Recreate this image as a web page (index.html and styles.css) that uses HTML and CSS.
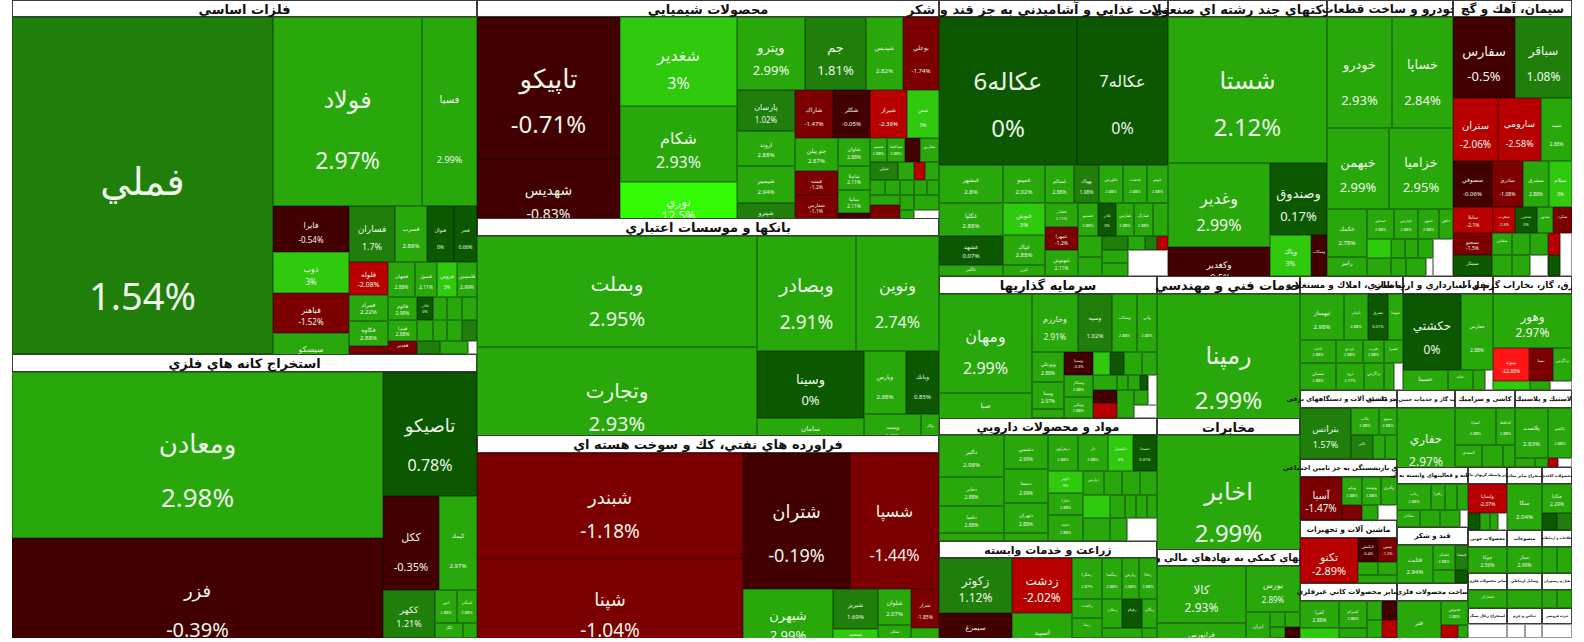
FILE: index.html
```html
<!DOCTYPE html>
<html lang="fa">
<head>
<meta charset="utf-8">
<title>نقشه بازار</title>
<link rel="stylesheet" href="styles.css">
</head>
<body>
<div class="map" id="map"></div>
<script src="script.js"></script>
</body>
</html>
```

FILE: styles.css
```css
html, body { margin: 0; padding: 0; background: #ffffff; }
body { font-family: "Noto Sans", "DejaVu Sans", sans-serif; }
.map { position: relative; margin-left: 12px; width: 1560px; height: 638px; overflow: hidden; }
.hd {
  position: absolute; box-sizing: border-box; background: #ffffff;
  border: 1px solid #3c3c3c; display: flex; align-items: center; justify-content: center;
  white-space: nowrap; color: #111111; font-family: "DejaVu Sans", sans-serif;
  font-weight: bold; direction: rtl; line-height: 1; padding-top: 1px;
}
.tl {
  position: absolute; box-sizing: border-box; border: 1px solid rgba(0,0,0,0.28);
  overflow: hidden; color: #eef6ea; text-align: center;
}
.nm, .pc { display: block; line-height: 1.2; white-space: nowrap; }
.g  { background: #28a80b; }
.g2 { background: #1f7f0a; }
.g3 { background: #0b5800; }
.gb { background: #2fc90e; }
.gl { background: #33fb05; }
.r1 { background: #420000; }
.r2 { background: #7c0000; }
.r3 { background: #b90000; }
.rb { background: #ff1414; }
.w  { background: #ffffff; border-color: #9a9a9a; }
```

FILE: script.js
```js
(function () {
  var OX = 12;
  var DATA = [
    { h: [12,0,477,17,'فلزات اساسي',13], t: [
      [12,17,273,354,'g2','فملي','1.54%',38,38,[163,278]],
      [273,17,422,206,'g','فولاد','2.97%',24,23],
      [422,17,477,206,'g','فسپا','2.99%',10,9],
      [273,206,349,252,'r1','فايرا','-0.54%',8],
      [349,206,395,262,'g2','فساران','1.7%',9],
      [395,206,427,262,'g','فسرب','2.88%',6],
      [427,206,454,262,'g3','فنوال','0%',5],
      [454,206,477,262,'g3','فجر','0.66%',5],
      [273,252,349,293,'gb','ذوب','3%',8],
      [349,262,388,295,'r3','فلوله','-2.08%',7],
      [388,262,415,297,'g','فجهان','2.88%',5],
      [415,262,437,297,'g','فسوژ','2.11%',5],
      [437,262,457,297,'gb','فروس','3%',5],
      [457,262,477,297,'g','فاسمين','2.99%',5],
      [273,293,349,333,'r2','فباهنر','-1.52%',8],
      [273,333,349,372,'g','سيسكو','',8],
      [349,295,388,321,'g','فمراد','2.22%',6],
      [349,321,388,346,'g','فكاوه','2.88%',6],
      [349,346,388,354,'r2','','',0],
      [388,297,417,320,'g','فالوم','2.99%',5],
      [417,297,433,320,'g3','فاذر','0%',4],
      [433,297,447,320,'g','','',0],
      [447,297,462,320,'g','','',0],
      [462,297,477,320,'g','','',0],
      [388,320,417,341,'g','فپيرا','2.88%',5],
      [417,320,433,341,'g','','',0],
      [433,320,447,341,'g','','',0],
      [447,320,462,341,'g','','',0],
      [462,320,477,341,'g2','','',0],
      [388,341,417,354,'r2','فغدير','',5],
      [417,341,440,354,'g2','','',0],
      [440,341,468,354,'g','','',0],
      [468,341,477,354,'w','','',0]
    ]},
    { h: [12,354,477,372,'استخراج كانه هاي فلزي',13], t: [
      [12,372,383,538,'g','ومعادن','2.98%',26],
      [12,538,383,660,'r1','فزر','-0.39%',18,20],
      [383,372,477,496,'g3','تاصيكو','0.78%',18,16],
      [383,496,439,590,'r1','ككل','-0.35%',11],
      [439,496,477,590,'g','كيماد','2.97%',6],
      [383,590,435,638,'g2','ككهر','1.21%',9],
      [435,590,457,623,'g','كنور','2.88%',4],
      [457,590,477,623,'g','كمنگنز','2.88%',4],
      [435,623,463,638,'g','كگل','',4],
      [463,623,477,638,'g','','',0]
    ]},
    { h: [477,0,939,17,'محصولات شيميايي',13], t: [
      [477,17,620,159,'r1','تاپيكو','-0.71%',26,24],
      [477,159,620,233,'r1','شهديس','-0.83%',14],
      [620,17,737,106,'gb','شغدير','3%',16],
      [620,106,737,182,'g','شكام','2.93%',16],
      [620,182,737,229,'gl','نوري','12.5%',12],
      [737,17,805,90,'g','وپترو','2.99%',13],
      [805,17,866,90,'g2','جم','1.81%',13],
      [866,17,903,90,'g','شپديس','2.82%',6],
      [903,17,939,90,'r2','بوعلي','-1.74%',6],
      [737,90,795,131,'g2','پارسان','1.02%',8],
      [795,90,833,138,'r2','شاراك','-1.47%',6],
      [833,90,870,138,'r1','شكلر','-0.05%',6],
      [870,90,907,138,'r3','شيراز','-2.39%',6],
      [907,90,939,138,'gb','شفن','3%',5],
      [737,131,795,166,'g','اروند','2.88%',6],
      [737,166,795,203,'g','شيمبير','2.94%',6],
      [737,203,795,229,'g2','شپترو','',6],
      [795,138,838,171,'g','جم پيلن','2.87%',6],
      [838,138,870,166,'g','شاوان','2.88%',5],
      [870,138,887,162,'g','شسم','2.88%',4],
      [887,138,905,162,'g','شپاكسا','2.88%',4],
      [905,138,920,162,'r1','','',0],
      [920,138,939,162,'g','شكربن','',4],
      [795,171,838,195,'r2','فيشه','-1.2%',5],
      [795,195,838,219,'r2','شفارس','-1.1%',5],
      [838,166,870,190,'g','شاملا','2.11%',5],
      [838,190,870,213,'g','ساينا','2.11%',5],
      [838,213,870,219,'r1','','',0],
      [870,162,898,180,'g2','شپلي','',4],
      [898,162,914,180,'g','','',0],
      [914,162,925,180,'r3','','',0],
      [925,162,939,180,'g','','',0],
      [870,180,885,195,'g','','',0],
      [885,180,900,195,'g','','',0],
      [900,180,914,195,'g','','',0],
      [914,180,927,195,'g','','',0],
      [927,180,939,195,'g','','',0],
      [870,195,900,205,'g','','',0],
      [900,195,914,210,'g','','',0],
      [914,195,939,210,'g','','',0],
      [870,205,900,219,'r2','','',0],
      [900,210,914,219,'g','','',0],
      [914,210,939,219,'w','','',0]
    ]},
    { h: [477,218,939,236,'بانكها و موسسات اعتباري',13], t: [
      [477,236,757,347,'g','وبملت','2.95%',20],
      [477,347,757,450,'g','وتجارت','2.93%',20],
      [757,236,856,351,'g','وبصادر','2.91%',19],
      [856,236,939,351,'g','ونوين','2.74%',16],
      [757,351,864,418,'g3','وسينا','0%',13],
      [757,418,864,445,'g','سامان','',7],
      [864,351,906,414,'g','وپارس','2.98%',6],
      [906,351,939,414,'g3','وبانك','0.85%',6],
      [864,414,921,445,'g','وپست','2.11%',5],
      [921,414,939,445,'g','وكار','',4]
    ]},
    { h: [477,435,939,453,'فراورده هاي نفتي، كك و سوخت هسته اي',13], t: [
      [477,453,743,558,'r2','شبندر','-1.18%',18,19],
      [477,558,743,655,'r2','شپنا','-1.04%',18,19],
      [743,453,850,589,'r1','شتران','-0.19%',18],
      [850,453,939,589,'r2','شسپا','-1.44%',16],
      [743,589,833,653,'g','شبهرن','2.99%',13],
      [833,589,878,629,'g2','شبريز','1.69%',6],
      [878,589,911,625,'g','شلوان','2.07%',6],
      [911,589,939,628,'r2','شراز','-1.85%',5],
      [833,629,878,645,'gb','شنفت','',5],
      [878,625,911,645,'g','شكلر','',4],
      [911,628,939,645,'g','','',0]
    ]},
    { h: [939,0,1168,17,'محصولات غذايي و آشاميدني به جز قند و شكر',13], t: [
      [939,17,1077,165,'g3','عكاله6','0%',24],
      [1077,17,1168,165,'g3','عكاله7','0%',16],
      [939,165,1003,203,'g','غبشهر','2.8%',6],
      [1003,165,1045,203,'g','غمينو','2.02%',6],
      [1045,165,1074,203,'g','غسالم','2.88%',5],
      [1074,165,1099,203,'g2','بهپاك','1.98%',5],
      [1099,165,1123,203,'g','غكورش','2.88%',4],
      [1123,165,1147,203,'g','غدشت','2.88%',4],
      [1147,165,1168,203,'g','غپينو','2.88%',4],
      [939,203,1003,236,'g','غگلپا','2.88%',6],
      [1003,203,1045,235,'gb','غنوش','3%',6],
      [1045,203,1078,227,'g','غشاذر','2.11%',4],
      [1078,203,1098,236,'g','غصينو','2.88%',4],
      [1098,203,1116,236,'g3','غاذر','0%',4],
      [1116,203,1134,236,'g','غفارس','2.88%',4],
      [1134,203,1153,236,'g','غمارگ','2.88%',4],
      [1153,203,1168,236,'g','','',0],
      [939,236,1003,265,'g3','غشهد','0.07%',6],
      [939,265,1003,276,'g','غالبر','',5],
      [1003,235,1045,265,'g','غپاك','2.88%',6],
      [1003,265,1045,276,'g','غزر','',5],
      [1045,227,1078,250,'r2','غمهرا','-1.2%',5],
      [1045,250,1078,276,'g','غبهنوش','2.11%',5],
      [1078,236,1102,257,'g','','',0],
      [1102,236,1128,250,'g2','','',0],
      [1128,236,1145,250,'g','','',0],
      [1145,236,1157,250,'g2','','',0],
      [1157,236,1168,250,'r3','','',0],
      [1078,257,1102,276,'g','','',0],
      [1102,250,1128,263,'g','','',0],
      [1102,263,1128,276,'g','','',0],
      [1128,250,1168,276,'w','','',0]
    ]},
    { h: [1168,0,1327,17,'شركتهاي چند رشته اي صنعتي',13], t: [
      [1168,17,1327,163,'g','شستا','2.12%',24],
      [1168,163,1270,247,'g','وغدير','2.99%',16],
      [1270,163,1327,235,'g3','وصندوق','0.17%',13],
      [1168,247,1270,290,'r1','وكغدير','-0.5%',9],
      [1270,235,1311,276,'gb','وپاك','3%',7],
      [1311,235,1327,276,'r1','وسكاب','',4]
    ]},
    { h: [1327,0,1453,17,'خودرو و ساخت قطعات',12], t: [
      [1327,17,1392,128,'g','خودرو','2.93%',13],
      [1392,17,1453,128,'g','خساپا','2.84%',13],
      [1327,128,1389,209,'g','خبهمن','2.99%',13],
      [1389,128,1453,209,'g','خزاميا','2.95%',13],
      [1327,209,1367,257,'g','خكمك','2.78%',6],
      [1327,257,1367,276,'g','رانيز','',6],
      [1367,209,1394,239,'g','خمحور','2.88%',4],
      [1394,209,1418,239,'g','خپارس','2.88%',4],
      [1418,209,1439,239,'g','خمهر','2.88%',4],
      [1439,209,1453,239,'g','خاهن','',4],
      [1367,239,1391,258,'gb','','',0],
      [1391,239,1405,258,'g','','',0],
      [1405,239,1418,258,'g','','',0],
      [1418,239,1433,258,'g','','',0],
      [1433,239,1453,276,'w','','',0],
      [1367,258,1391,276,'g','','',0],
      [1391,258,1406,276,'g','','',0],
      [1406,258,1426,276,'g','','',0],
      [1426,258,1433,276,'w','','',0]
    ]},
    { h: [1453,0,1572,17,'سيمان، آهك و گچ',12], t: [
      [1453,17,1515,98,'r1','سفارس','-0.5%',13],
      [1515,17,1572,98,'g2','سباقر','1.08%',12],
      [1453,98,1498,161,'r3','ستران','-2.06%',10],
      [1498,98,1541,161,'r3','سارومي','-2.58%',9],
      [1541,98,1572,161,'g','سپيد','2.88%',5],
      [1453,161,1492,207,'r1','سصوفي','-0.06%',6],
      [1492,161,1523,207,'r2','ساذري','-1.08%',5],
      [1523,161,1549,207,'g','سشرق','2.88%',5],
      [1549,161,1572,207,'gb','سيلام','3%',5],
      [1453,207,1493,233,'r3','سايلا','-2.1%',5],
      [1493,207,1515,233,'r3','سغرب','-2.3%',4],
      [1515,207,1537,233,'g3','سخزر','0%',4],
      [1537,207,1553,233,'g','سدور','',4],
      [1553,207,1572,233,'r2','سكرد','',4],
      [1453,233,1492,255,'r2','سبجنو','-1.5%',5],
      [1453,255,1492,276,'g3','سمتاز','',5],
      [1492,233,1512,255,'g','سقاين','',4],
      [1512,233,1530,255,'g','','',0],
      [1530,233,1548,255,'g','','',0],
      [1548,233,1560,255,'r3','','',0],
      [1560,233,1572,276,'w','','',0],
      [1492,255,1512,276,'g','','',0],
      [1512,255,1530,276,'g','','',0],
      [1530,255,1548,276,'w','','',0],
      [1548,255,1560,276,'g3','','',0]
    ]},
    { h: [939,276,1157,294,'سرمايه گذاريها',13], t: [
      [939,294,1032,393,'g','ومهان','2.99%',16],
      [939,393,1032,425,'g','صبا','',7],
      [1032,294,1078,352,'g','وخارزم','2.91%',8],
      [1078,294,1112,352,'g2','وسپه','1.02%',6],
      [1112,294,1137,352,'g','وسكاب','2.88%',4],
      [1137,294,1157,352,'g','وآتي','2.88%',4],
      [1032,352,1064,382,'g','وبوعلي','2.88%',5],
      [1032,382,1064,409,'g','وسنا','2.97%',5],
      [1032,409,1064,418,'g','','',0],
      [1064,352,1093,375,'r1','وسينا','-0.3%',4],
      [1093,352,1110,375,'gb','','',0],
      [1110,352,1124,375,'g3','','',0],
      [1124,352,1142,375,'g','','',0],
      [1142,352,1157,375,'g','','',0],
      [1064,375,1093,397,'g','وسكار','2.88%',4],
      [1064,397,1093,418,'g','ونيكي','2.88%',4],
      [1093,375,1117,390,'g','','',0],
      [1117,375,1128,390,'g','','',0],
      [1128,375,1140,390,'g','','',0],
      [1140,375,1148,390,'g3','','',0],
      [1148,375,1157,405,'w','','',0],
      [1093,390,1117,403,'r1','','',0],
      [1093,403,1117,418,'r3','','',0],
      [1117,390,1134,418,'g','','',0],
      [1134,390,1148,405,'g','','',0],
      [1134,405,1157,418,'w','','',0]
    ]},
    { h: [1157,276,1300,294,'خدمات فني و مهندسي',13], t: [
      [1157,294,1300,435,'g','رمپنا','2.99%',24]
    ]},
    { h: [939,418,1157,435,'مواد و محصولات دارويي',12], t: [
      [939,435,1004,477,'g','دالبر','2.98%',6],
      [939,477,1004,506,'g','دجابر','2.88%',5],
      [939,506,1004,533,'g','دلقما','2.88%',5],
      [939,533,1004,541,'g','','',0],
      [1004,435,1048,469,'g','دشيمي','2.99%',5],
      [1004,469,1048,503,'g','دسينا','2.99%',5],
      [1004,503,1048,533,'g','دتهران','2.88%',5],
      [1004,533,1048,541,'g','','',0],
      [1048,435,1078,471,'g','دزهراوي','2.88%',4],
      [1078,435,1108,471,'g','دلر','2.88%',4],
      [1108,435,1133,471,'gb','دكپسول','3%',4],
      [1133,435,1157,471,'g3','دسبحا','0.01%',4],
      [1048,471,1083,493,'gb','دكوثر','3%',4],
      [1048,493,1083,515,'g','دفارا','2.88%',4],
      [1048,515,1083,541,'g','دعبيد','2.88%',4],
      [1083,471,1104,495,'g','دپارس','',4],
      [1104,471,1122,495,'g','','',0],
      [1122,471,1140,495,'g','','',0],
      [1140,471,1157,495,'g','','',0],
      [1083,495,1110,518,'gb','','',0],
      [1110,495,1125,518,'g','','',0],
      [1125,495,1136,518,'g','','',0],
      [1136,495,1147,518,'g','','',0],
      [1147,495,1157,518,'g','','',0],
      [1083,518,1110,541,'g','','',0],
      [1110,518,1127,541,'g','','',0],
      [1127,518,1157,541,'w','','',0]
    ]},
    { h: [1157,418,1300,435,'مخابرات',13], t: [
      [1157,435,1300,565,'g','اخابر','2.99%',24]
    ]},
    { h: [1157,549,1300,566,'فعاليتهاي كمكي به نهادهاي مالي واسط',10], t: [
      [1157,566,1246,623,'g','كالا','2.93%',12],
      [1157,623,1246,652,'g','فرابورس','',7],
      [1246,566,1300,612,'g','بورس','2.89%',8],
      [1246,612,1270,645,'g','ايران','',5],
      [1270,612,1285,627,'g','','',0],
      [1285,612,1300,627,'g','','',0],
      [1270,627,1285,638,'g','','',0],
      [1285,627,1300,638,'r1','','',0]
    ]},
    { h: [939,541,1157,558,'زراعت و خدمات وابسته',11], t: [
      [939,558,1012,613,'g2','زكوثر','1.12%',12],
      [1012,558,1072,613,'r3','زدشت','-2.02%',12],
      [1072,558,1102,599,'g','زشگزا','2.87%',4],
      [1102,558,1122,599,'g','زمگسا','2.88%',4],
      [1122,558,1139,599,'g','زپارس','2.88%',4],
      [1139,558,1157,599,'g','زفكا','2.88%',4],
      [939,613,1012,650,'r1','سيمرغ','',7],
      [1012,613,1072,660,'g','اسپيد','2.99%',7],
      [1072,599,1102,618,'g','زكشت','',4],
      [1072,618,1102,638,'g','زبينا','',4],
      [1102,599,1122,628,'g','زملارد','',4],
      [1122,599,1142,628,'g3','زقيام','',4],
      [1142,599,1157,628,'g','زنگان','',4],
      [1102,628,1142,638,'g','','',0],
      [1142,628,1157,638,'g','','',0]
    ]},
    { h: [1300,276,1403,294,'انبوه سازي، املاك و مستغلات',9], t: [
      [1300,294,1344,340,'g','ثبهساز','2.98%',6],
      [1344,294,1368,340,'g','ثامان','2.88%',4],
      [1368,294,1388,340,'g3','ثشرق','0.01%',4],
      [1388,294,1403,340,'g','ثنوسا','',4],
      [1300,340,1336,363,'g','ثاخت','2.88%',4],
      [1336,340,1363,363,'g','ثپردي','2.88%',4],
      [1363,340,1384,363,'g','ثغرب','2.88%',4],
      [1384,340,1403,363,'g','ثعمرا','',4],
      [1300,363,1336,390,'g','ثمسكن','2.88%',4],
      [1336,363,1364,390,'g','ثرود','2.77%',4],
      [1364,363,1384,390,'g','ثزاگرس','',4],
      [1384,363,1394,390,'g','','',0],
      [1394,363,1403,390,'w','','',0]
    ]},
    { h: [1403,276,1493,294,'حمل و نقل، انبارداري و ارتباطات',9], t: [
      [1403,294,1461,370,'g3','حكشتي','0%',12],
      [1461,294,1493,370,'g','حفارس','2.88%',5],
      [1403,370,1448,395,'g','حسينا','',6],
      [1448,370,1473,390,'g','حتايد','',4],
      [1473,370,1485,390,'g','','',0],
      [1485,370,1493,390,'w','','',0]
    ]},
    { h: [1493,276,1572,294,'عرضه برق، گاز، بخاراب گرم و آب',9], t: [
      [1493,294,1572,348,'g','وهور','2.97%',12],
      [1493,348,1529,381,'rb','بپيوند','-22.88%',5],
      [1529,348,1553,381,'r2','بمپنا','',4],
      [1553,348,1572,381,'g','بزاگرس','',4],
      [1493,381,1530,390,'gb','','',0],
      [1530,381,1550,390,'g','','',0],
      [1550,381,1572,390,'w','','',0]
    ]},
    { h: [1300,390,1397,408,'ساخت ماشين آلات و دستگاههاي برقي',6.5], t: [
      [1300,408,1351,459,'g2','بترانس','1.57%',9],
      [1351,408,1379,435,'g','بكاب','2.88%',4],
      [1379,408,1397,435,'g','بموتو','2.88%',4],
      [1351,435,1373,459,'g2','بالبر','',4],
      [1373,435,1385,459,'g','','',0],
      [1385,435,1397,459,'g','','',0]
    ]},
    { h: [1397,390,1455,408,'استخراج نفت گاز و خدمات جنبي جز اكتشاف',5.5], t: [
      [1397,408,1455,481,'g','حفاري','2.97%',12]
    ]},
    { h: [1455,390,1515,408,'كاشي و سراميك',6.5], t: [
      [1455,408,1496,445,'g','كساپا','2.88%',4],
      [1496,408,1515,445,'g','كحافظ','2.88%',4],
      [1455,445,1482,467,'g','كسعدي','',4],
      [1482,445,1503,467,'g','','',0],
      [1503,445,1515,467,'g','','',0]
    ]},
    { h: [1515,390,1572,408,'لاستيك و پلاستيك',6.5], t: [
      [1515,408,1548,458,'g','پلاست','2.83%',6],
      [1548,408,1572,458,'g','پاكشو','2.88%',4],
      [1515,458,1535,467,'g','','',0],
      [1535,458,1548,467,'g','','',0],
      [1548,458,1558,467,'r3','','',0],
      [1558,458,1572,467,'w','','',0]
    ]},
    { h: [1300,459,1397,477,'صندوق بازنشستگي به جز تامين اجتماعي',6.5], t: [
      [1300,477,1342,520,'r2','آسيا','-1.47%',10],
      [1342,477,1362,505,'g','ويكم','2.88%',4],
      [1362,477,1381,505,'g','وتوشه','2.88%',4],
      [1381,477,1397,505,'g','وآفري','',4],
      [1342,505,1362,520,'r2','','',0],
      [1362,505,1378,520,'g','','',0],
      [1378,505,1397,520,'w','','',0]
    ]},
    { h: [1300,520,1397,538,'ماشين آلات و تجهيزات',7.5], t: [
      [1300,538,1358,583,'r3','تكنو','-2.89%',11],
      [1358,538,1378,562,'r1','تاپكيش','-0.4%',4],
      [1378,538,1397,562,'r2','تپمپي','-1.2%',4],
      [1358,562,1378,575,'g','','',0],
      [1378,562,1397,575,'g','','',0],
      [1358,575,1397,583,'g','','',0]
    ]},
    { h: [1300,583,1397,601,'ساير محصولات كاني غيرفلزي',7], t: [
      [1300,601,1339,628,'g','كفرا','2.88%',5],
      [1300,628,1339,660,'gb','كساوه','',5],
      [1339,601,1367,628,'g','كسرام','2.88%',4],
      [1339,628,1367,638,'g','','',0],
      [1367,601,1382,620,'g','','',0],
      [1382,601,1397,620,'r1','','',0],
      [1367,620,1382,638,'g','','',0],
      [1382,620,1397,638,'r3','','',0]
    ]},
    { h: [1397,467,1468,484,'رايانه و فعاليتهاي وابسته به آن',5.5], t: [
      [1397,484,1431,510,'g','رتاپ','2.88%',4],
      [1431,484,1445,510,'g','رافزا','',4],
      [1445,484,1457,510,'g','','',0],
      [1457,484,1468,510,'g','','',0],
      [1397,510,1420,527,'g','مفاخر','',4],
      [1420,510,1440,527,'g','','',0],
      [1440,510,1460,527,'g','','',0],
      [1460,510,1468,527,'w','','',0]
    ]},
    { h: [1397,527,1468,545,'قند و شكر',7], t: [
      [1397,545,1433,583,'g','قثابت','2.94%',6],
      [1433,545,1455,570,'g','قشكر','2.88%',4],
      [1455,545,1468,570,'g2','قنيشا','',4],
      [1433,570,1455,583,'g','','',0],
      [1455,570,1468,583,'g3','','',0]
    ]},
    { h: [1397,583,1468,601,'ساخت محصولات فلزي',6.5], t: [
      [1397,601,1441,655,'g','فنر','2.89%',6],
      [1441,601,1468,625,'g','فجوش','2.88%',4],
      [1441,625,1458,638,'r3','','',0],
      [1458,625,1468,638,'g','','',0]
    ]},
    { h: [1468,467,1507,484,'ساير واسطه گريهاي مالي',3.6], t: [
      [1468,484,1507,513,'r3','ولساپا','-2.07%',5],
      [1468,513,1480,530,'g3','','',0],
      [1480,513,1490,530,'g','','',0],
      [1490,513,1498,530,'g','','',0],
      [1498,513,1507,530,'w','','',0]
    ]},
    { h: [1507,467,1542,484,'استخراج ساير معادن',3.8], t: [
      [1507,484,1542,530,'g','سكا','2.04%',6]
    ]},
    { h: [1542,467,1572,484,'محصولات كاغذي',3.8], t: [
      [1542,484,1572,513,'g','چكاپا','2.29%',5],
      [1542,513,1557,530,'g3','','',0],
      [1557,513,1572,530,'g2','','',0]
    ]},
    { h: [1468,530,1507,547,'محصولات چوبي',4.5], t: [
      [1468,547,1507,573,'g','چوكا','2.56%',5]
    ]},
    { h: [1507,530,1542,547,'منسوجات',4.5], t: [
      [1507,547,1542,573,'g','نساز','2.99%',5]
    ]},
    { h: [1542,530,1572,547,'اطلاعات و ارتباطات',3.2], t: [
      [1542,547,1557,573,'g','','',0],
      [1557,547,1572,573,'g','','',0]
    ]},
    { h: [1468,573,1507,590,'ساير محصولات فلزي',3.6], t: [
      [1468,590,1507,608,'g','فسازان','',4]
    ]},
    { h: [1507,573,1542,590,'وسايل ارتباطي',3.6], t: [
      [1507,590,1542,608,'g','','',0]
    ]},
    { h: [1542,573,1572,590,'هتل و رستوران',3.4], t: [
      [1542,590,1557,608,'g','','',0],
      [1557,590,1572,608,'g','','',0]
    ]},
    { h: [1468,608,1507,624,'استخراج زغال سنگ',3.6], t: [
      [1468,624,1507,638,'w','','',0]
    ]},
    { h: [1507,608,1542,624,'دباغي و چرم',3.6], t: [
      [1507,624,1525,638,'w','','',0],
      [1525,624,1542,638,'w','','',0]
    ]},
    { h: [1542,608,1572,624,'خرده فروشي',3.4], t: [
      [1542,624,1572,638,'w','','',0]
    ]}
  ];

  var map = document.getElementById('map');

  function place(el, x1, y1, x2, y2) {
    el.style.left = (x1 - OX) + 'px';
    el.style.top = y1 + 'px';
    el.style.width = (x2 - x1) + 'px';
    el.style.height = (y2 - y1) + 'px';
  }

  function header(h) {
    var d = document.createElement('div');
    d.className = 'hd';
    place(d, h[0], h[1], h[2], h[3]);
    d.style.fontSize = h[5] + 'px';
    var s = document.createElement('span');
    s.textContent = h[4];
    d.appendChild(s);
    map.appendChild(d);
  }

  function tile(t) {
    var d = document.createElement('div');
    d.className = 'tl ' + t[4];
    place(d, t[0], t[1], t[2], t[3]);
    var fs = t[7] || 0, fs2 = t[8] || fs, h = t[3] - t[1];
    if (fs > 0 && t[5]) {
      var c1, c2;
      if (t[9]) { c1 = t[9][0]; c2 = t[9][1]; }
      else { c1 = 0.44 * h - 2; c2 = 0.77 * h - 3; }
      var mx = Math.max(fs, fs2) * 1.15;
      if (c2 - c1 < mx) { var m = (c1 + c2) / 2; c1 = m - mx / 2; c2 = m + mx / 2; }
      var top1 = Math.max(0, c1 - 0.6 * fs);
      d.style.paddingTop = top1.toFixed(1) + 'px';
      var a = document.createElement('span');
      a.className = 'nm';
      a.style.fontSize = fs + 'px';
      a.textContent = t[5];
      d.appendChild(a);
      if (t[6]) {
        var b = document.createElement('span');
        b.className = 'pc';
        b.style.fontSize = fs2 + 'px';
        b.style.marginTop = (c2 - 0.6 * fs2 - (top1 + 1.2 * fs)).toFixed(1) + 'px';
        b.textContent = t[6];
        d.appendChild(b);
      }
    }
    map.appendChild(d);
  }

  DATA.forEach(function (s) {
    header(s.h);
    s.t.forEach(tile);
  });
})();
```
